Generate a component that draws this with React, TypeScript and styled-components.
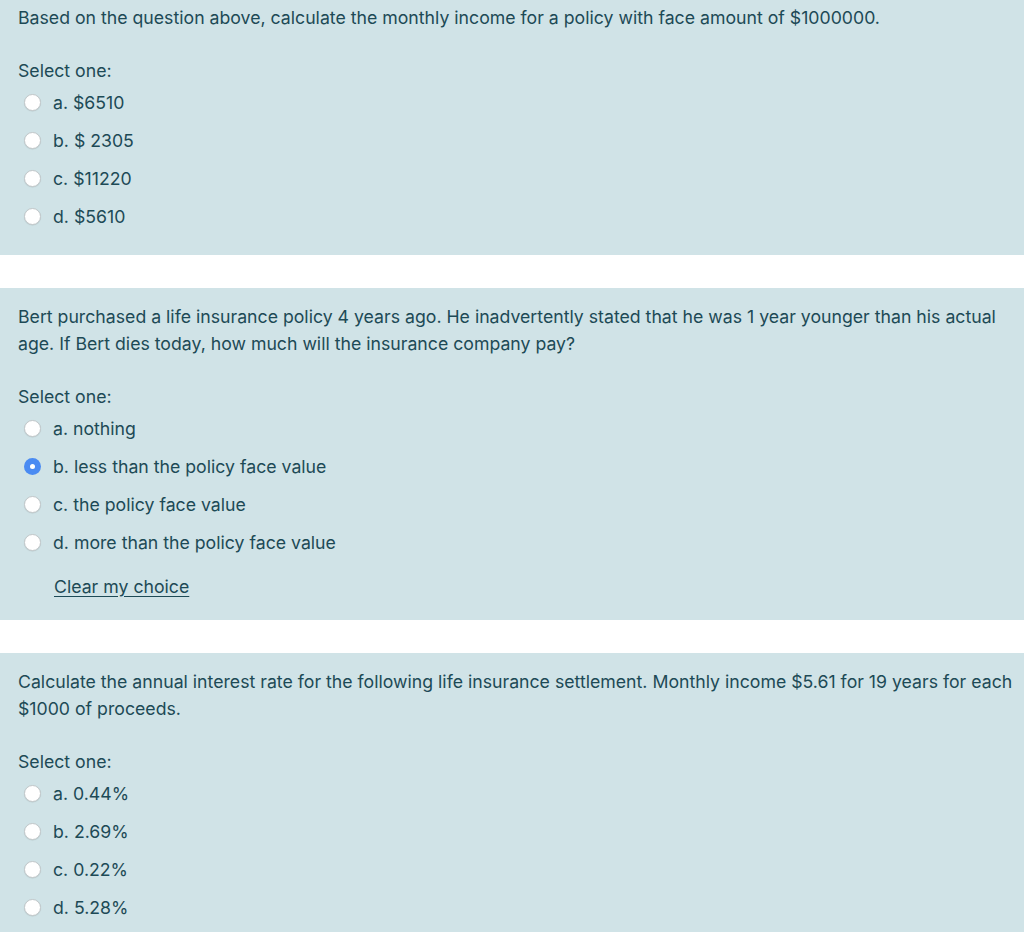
import React from "react";
import styled, { createGlobalStyle } from "styled-components";

const Global = createGlobalStyle`
  html, body { margin: 0; padding: 0; background: #ffffff; }
  body { font-family: Inter, "Noto Sans", sans-serif; }
  #root { overflow: hidden; height: 932px; }
`;

const Page = styled.div`
  display: flex;
  flex-direction: column;
  gap: 33px;
`;

const Panel = styled.section<{ $cropTop?: boolean }>`
  background: #d0e3e7;
  color: #1d4a56;
  font-size: 17.7px;
  line-height: 27px;
  padding: ${(p) => (p.$cropTop ? "4px" : "15px")} 8px 20px 18px;
`;

const Question = styled.p`
  margin: 0 0 26px 0;
`;

const Prompt = styled.div`
  margin: 0;
`;

const Options = styled.div`
  display: flex;
  flex-direction: column;
  margin-top: -1px;
`;

const Option = styled.label`
  display: flex;
  align-items: center;
  height: 38px;
  gap: 12px;
  padding-left: 6px;
`;

const Radio = styled.span<{ $checked?: boolean }>`
  width: 17px;
  height: 17px;
  border-radius: 50%;
  box-sizing: border-box;
  flex: none;
  display: flex;
  align-items: center;
  justify-content: center;
  background: ${(p) => (p.$checked ? "#4a8bf2" : "#ffffff")};
  border: ${(p) => (p.$checked ? "none" : "1px solid #c2c8ca")};
  box-shadow: ${(p) => (p.$checked ? "none" : "0 0.5px 1px rgba(0,0,0,0.12)")};
  &::after {
    content: "";
    display: ${(p) => (p.$checked ? "block" : "none")};
    width: 5px;
    height: 5px;
    border-radius: 50%;
    background: #ffffff;
  }
`;

const ClearLink = styled.a`
  display: inline-block;
  margin: 12px 0 0 36px;
  color: #1d4a56;
  text-decoration: underline;
  text-underline-offset: 3px;
`;

type Q = {
  text: string;
  options: string[];
  checked?: number;
  clear?: boolean;
  cropTop?: boolean;
};

const questions: Q[] = [
  {
    text: "Based on the question above, calculate the monthly income for a policy with face amount of $1000000.",
    options: ["a. $6510", "b. $ 2305", "c. $11220", "d. $5610"],
    cropTop: true,
  },
  {
    text: "Bert purchased a life insurance policy 4 years ago. He inadvertently stated that he was 1 year younger than his actual age. If Bert dies today, how much will the insurance company pay?",
    options: [
      "a. nothing",
      "b. less than the policy face value",
      "c. the policy face value",
      "d. more than the policy face value",
    ],
    checked: 1,
    clear: true,
  },
  {
    text: "Calculate the annual interest rate for the following life insurance settlement. Monthly income $5.61 for 19 years for each $1000 of proceeds.",
    options: ["a. 0.44%", "b. 2.69%", "c. 0.22%", "d. 5.28%"],
  },
];

export default function App() {
  return (
    <>
      <Global />
      <Page>
        {questions.map((q, i) => (
          <Panel key={i} $cropTop={q.cropTop}>
            <Question>{q.text}</Question>
            <Prompt>Select one:</Prompt>
            <Options>
              {q.options.map((o, j) => (
                <Option key={j}>
                  <Radio $checked={q.checked === j} />
                  <span>{o}</span>
                </Option>
              ))}
            </Options>
            {q.clear && <ClearLink href="#">Clear my choice</ClearLink>}
          </Panel>
        ))}
      </Page>
    </>
  );
}
